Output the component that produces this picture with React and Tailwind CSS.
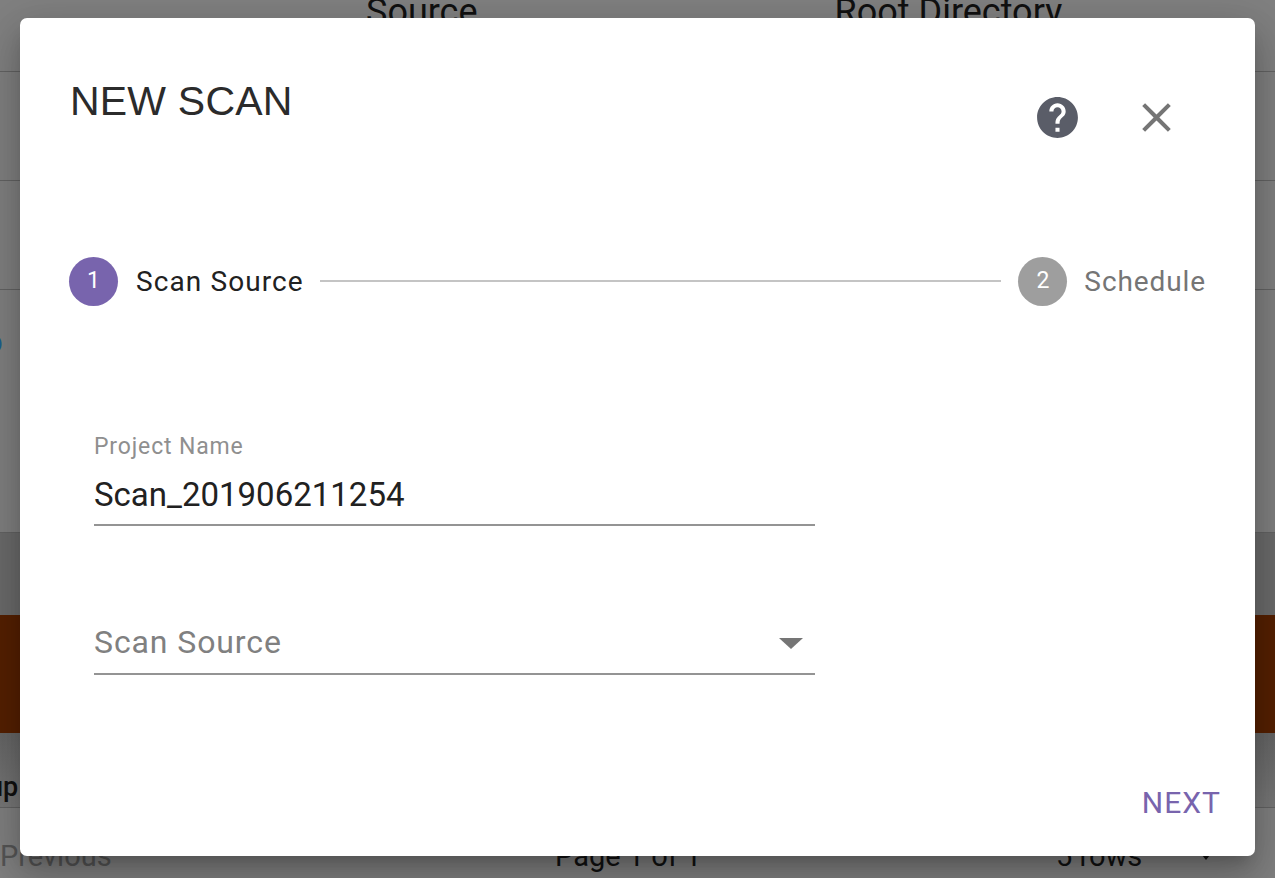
export default function App() {
  return (
    <div className="relative h-[878px] w-[1275px] overflow-hidden bg-[#808080] font-['Roboto','Liberation_Sans',sans-serif]">
      <div className="flex flex-col">
        <div className="flex h-[72px] items-start border-b border-[#636363] text-[36px] leading-[24px] text-[#111111]">
          <span className="ml-[366px]">Source</span>
          <span className="ml-[357px]">Root Directory</span>
        </div>
        <div className="h-[109px] border-b border-[#636363]" />
        <div className="h-[109px] border-b border-[#636363]" />
        <div className="h-[243px] border-b border-[#636363] pt-[34px]">
          <span className="-ml-[16px] text-[33px] leading-[36px] text-[#1a5f8f]">o</span>
        </div>
        <div className="h-[82px] bg-[#6b6b6b]" />
        <div className="h-[118px] bg-[#552000]" />
        <div className="h-[75px] border-b border-[#636363] bg-gradient-to-b from-[#666666] to-[#787878]">
          <div className="-ml-[55px] pt-[38px] text-[27px] font-medium leading-[33px] text-[#111111]">Group</div>
        </div>
        <div className="flex h-[70px] items-start pt-[30px] text-[29px] leading-[36px]">
          <span className="w-[555px] text-[#555555]">Previous</span>
          <span className="w-[501px] text-[#111111]">Page 1 of 1</span>
          <span className="w-[146px] text-[#111111]">5 rows</span>
          <div className="mt-[17px] h-0 w-0 border-x-[4px] border-t-[5px] border-x-transparent border-t-[#111111]" />
        </div>
      </div>

      <div className="absolute left-[20px] top-[18px] flex h-[838px] w-[1235px] flex-col rounded-[7px] bg-white shadow-[0_11px_15px_-7px_rgba(0,0,0,0.2),0_24px_38px_3px_rgba(0,0,0,0.14),0_9px_46px_8px_rgba(0,0,0,0.12)]">
        <div className="flex h-[128px] items-start pl-[50px] pr-[74px]">
          <h1 className="mt-[58px] font-['Liberation_Sans',sans-serif] text-[41px] font-normal leading-[50px] tracking-[0.2px] text-[#2b2b2b]">NEW SCAN</h1>
          <div className="ml-auto mt-[75px] flex items-center gap-[50px]">
            <svg viewBox="0 0 24 24" className="h-[49px] w-[49px] fill-[#5a5d68]">
              <path d="M12 2C6.48 2 2 6.48 2 12s4.48 10 10 10 10-4.48 10-10S17.52 2 12 2zm1 17h-2v-2h2v2zm2.07-7.75l-.9.92C13.45 12.9 13 13.5 13 15h-2v-.5c0-1.1.45-2.1 1.17-2.83l1.24-1.26c.37-.36.59-.86.59-1.41 0-1.1-.9-2-2-2s-2 .9-2 2H8c0-2.21 1.79-4 4-4s4 1.79 4 4c0 .88-.36 1.68-.93 2.25z" />
            </svg>
            <svg viewBox="0 0 24 24" className="h-[49px] w-[49px] fill-[#757575]">
              <path d="M19 6.41L17.59 5 12 10.59 6.41 5 5 6.41 10.59 12 5 17.59 6.41 19 12 13.41 17.59 19 19 17.59 13.41 12z" />
            </svg>
          </div>
        </div>

        <div className="mt-[111px] flex items-center pl-[49px] pr-[49px]">
          <div className="flex h-[49px] w-[49px] items-center justify-center rounded-full bg-[#7864ad] text-[23px] text-white">1</div>
          <span className="ml-[18px] text-[28px] leading-[36px] tracking-[1.1px] text-[#212121]">Scan Source</span>
          <div className="ml-[16px] mr-[17px] mb-[1px] h-[2px] flex-1 bg-[#c4c4c4]" />
          <div className="flex h-[49px] w-[49px] items-center justify-center rounded-full bg-[#9e9e9e] text-[23px] text-white">2</div>
          <span className="ml-[17px] text-[28px] leading-[36px] tracking-[0.9px] text-[#757575]">Schedule</span>
        </div>

        <div className="ml-[74px] mt-[127px] w-[721px]">
          <div className="flex flex-col border-b-2 border-[#949494] pb-[9px]">
            <label className="text-[23px] leading-[28px] tracking-[0.85px] text-[#8f8f8f]">Project Name</label>
            <span className="mt-[14px] text-[33px] leading-[40px] text-[#212121]">Scan_201906211254</span>
          </div>
          <div className="mt-[90px] flex items-center justify-between border-b-2 border-[#949494] pb-[7px] pr-[12px] pt-[2px]">
            <span className="text-[32px] leading-[48px] tracking-[0.9px] text-[#808080]">Scan Source</span>
            <div className="mt-[2px] h-0 w-0 border-x-[12px] border-t-[11px] border-x-transparent border-t-[#757575]" />
          </div>
        </div>

        <div className="mt-auto flex justify-end pb-[35px] pr-[34px]">
          <button className="text-[30px] leading-[36px] tracking-[1px] text-[#7864ad]">NEXT</button>
        </div>
      </div>
    </div>
  );
}
